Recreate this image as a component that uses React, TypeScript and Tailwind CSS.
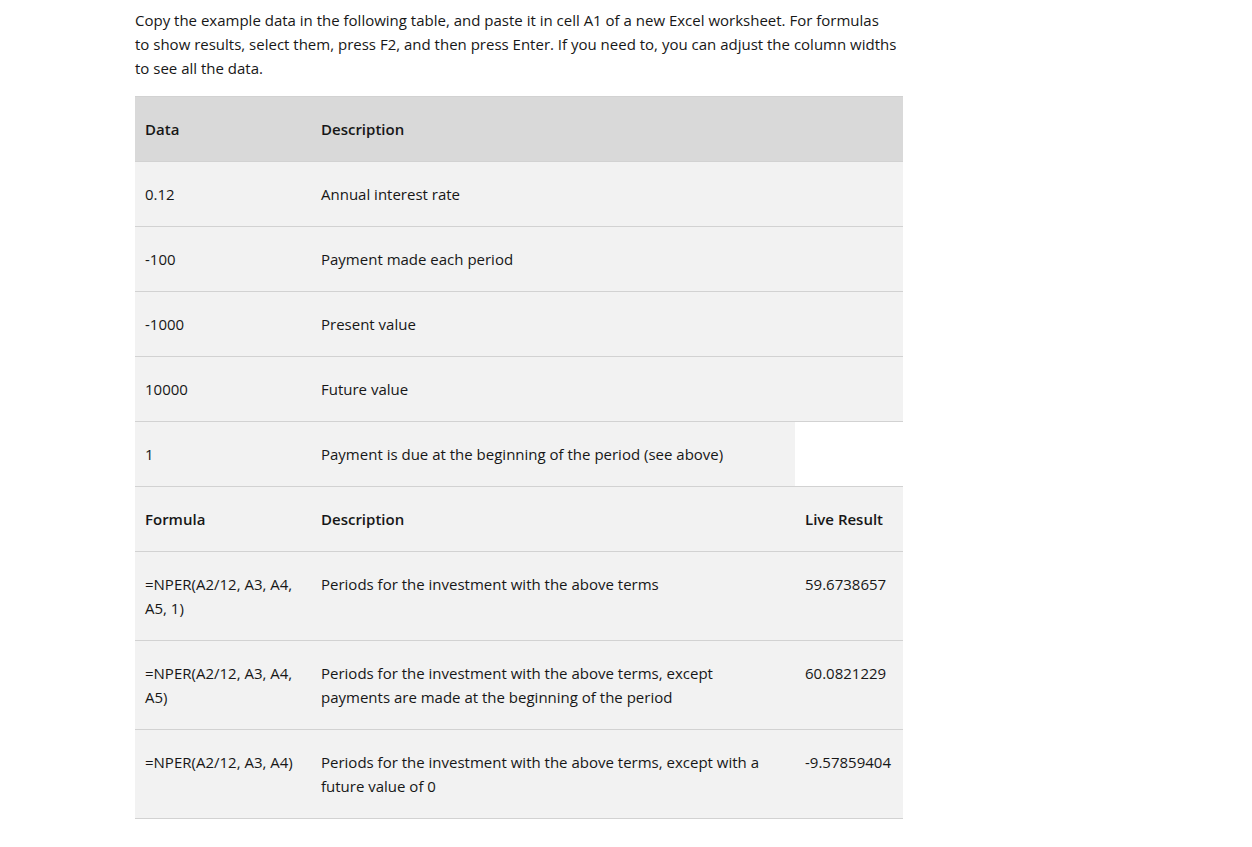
import React from "react";

type Row = { a: string; b: string; c?: string; bold?: boolean; head?: boolean; noC?: boolean };

const rows: Row[] = [
  { a: "Data", b: "Description", head: true, bold: true },
  { a: "0.12", b: "Annual interest rate" },
  { a: "-100", b: "Payment made each period" },
  { a: "-1000", b: "Present value" },
  { a: "10000", b: "Future value" },
  { a: "1", b: "Payment is due at the beginning of the period (see above)", noC: true },
  { a: "Formula", b: "Description", c: "Live Result", bold: true },
  { a: "=NPER(A2/12, A3, A4, A5, 1)", b: "Periods for the investment with the above terms", c: "59.6738657" },
  {
    a: "=NPER(A2/12, A3, A4, A5)",
    b: "Periods for the investment with the above terms, except payments are made at the beginning of the period",
    c: "60.0821229",
  },
  {
    a: "=NPER(A2/12, A3, A4)",
    b: "Periods for the investment with the above terms, except with a future value of 0",
    c: "-9.57859404",
  },
];

export default function App() {
  return (
    <div
      className="min-h-screen bg-white pl-[135px] pt-2 text-[#171717] text-[15px] leading-6"
      style={{ fontFamily: '"Open Sans", "Noto Sans", sans-serif' }}
    >
      <p className="w-[780px] whitespace-nowrap">
        Copy the example data in the following table, and paste it in cell A1 of a new Excel worksheet. For formulas
        <br />
        to show results, select them, press F2, and then press Enter. If you need to, you can adjust the column widths
        <br />
        to see all the data.
      </p>

      <table className="mt-4 w-[768px] table-fixed border-collapse border-t border-[#d2d2d2]">
        <colgroup>
          <col className="w-[176px]" />
          <col className="w-[484px]" />
          <col className="w-[108px]" />
        </colgroup>
        <tbody>
          {rows.map((r, i) => (
            <tr key={i} className={`border-b border-[#d2d2d2] ${r.head ? "bg-[#d9d9d9]" : "bg-[#f2f2f2]"}`}>
              <td className={`px-[10px] pt-5 pb-5 align-top ${r.bold ? "font-semibold" : ""}`}>{r.a}</td>
              <td className={`px-[10px] pt-5 pb-5 align-top ${r.bold ? "font-semibold" : ""}`}>{r.b}</td>
              <td
                className={`pl-[10px] pr-0 pt-5 pb-5 align-top whitespace-nowrap ${r.bold ? "font-semibold" : ""} ${
                  r.noC ? "bg-white" : ""
                }`}
              >
                {r.c ?? ""}
              </td>
            </tr>
          ))}
        </tbody>
      </table>
    </div>
  );
}
